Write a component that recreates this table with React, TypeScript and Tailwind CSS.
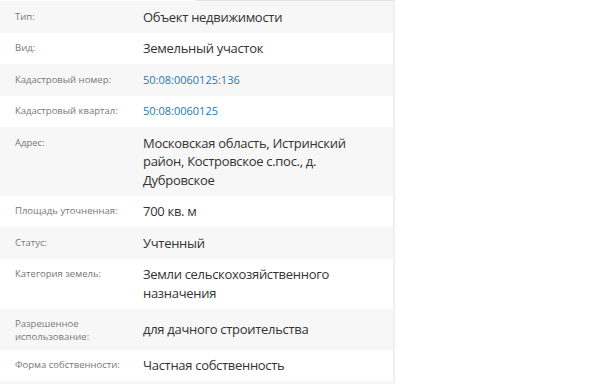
const rows: { label: string; value: string; link?: boolean }[] = [
  { label: 'Тип:', value: 'Объект недвижимости' },
  { label: 'Вид:', value: 'Земельный участок' },
  { label: 'Кадастровый номер:', value: '50:08:0060125:136', link: true },
  { label: 'Кадастровый квартал:', value: '50:08:0060125', link: true },
  { label: 'Адрес:', value: 'Московская область, Истринский район, Костровское с.пос., д. Дубровское' },
  { label: 'Площадь уточненная:', value: '700 кв. м' },
  { label: 'Статус:', value: 'Учтенный' },
  { label: 'Категория земель:', value: 'Земли сельскохозяйственного назначения' },
  { label: 'Разрешенное использование:', value: 'для дачного строительства' },
  { label: 'Форма собственности:', value: 'Частная собственность' },
  { label: '', value: '' },
];

export default function App() {
  return (
    <div className="h-[384px] w-[600px] overflow-hidden bg-white font-['Open_Sans',sans-serif]">
      <div className="w-[395px] border-r-2 border-[#efefef]">
        <div className="ml-[196px] h-px bg-[#e3e3e3]" />
        {rows.map((row, i) => (
          <div
            key={i}
            className={`flex min-h-[31.5px] py-[6.5px] ${i % 2 === 0 ? 'bg-[#f7f7f7]' : 'bg-white'}`}
          >
            <div className="mt-[2px] w-[143px] shrink-0 self-start pl-[15px] pr-[10px] text-[9.5px] leading-[13px] text-[#777]">
              {row.label}
            </div>
            {row.link ? (
              <div className="self-center pr-[18px] text-[11px] leading-[18.5px] text-[#2479b3]">{row.value}</div>
            ) : (
              <div className="self-center pr-[18px] text-[13px] leading-[18.5px] tracking-[-0.3px] text-[#333]">
                {row.value}
              </div>
            )}
          </div>
        ))}
      </div>
    </div>
  );
}
